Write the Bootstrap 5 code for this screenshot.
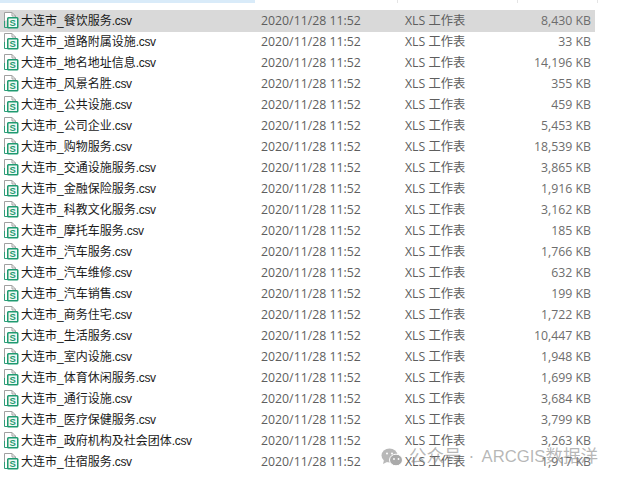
<!DOCTYPE html>
<html lang="zh"><head><meta charset="utf-8">
<link href="https://cdn.jsdelivr.net/npm/bootstrap@5.3.0/dist/css/bootstrap.min.css" rel="stylesheet">
<style>
html,body{margin:0;height:481px;overflow:hidden;background:#fff}
body{font-family:"Open Sans","Noto Sans CJK SC",sans-serif;font-size:12.3px;line-height:22px;position:relative}
.topstrip{height:3px;background:#fff}
.tab-blue{width:255px;background:#d9ebf9}
.tab-sep{border-right:1px solid #e5e5e5}
.sep-a{width:143px}.sep-b{width:120px}.sep-c{width:80px}
.files{width:595px;margin-top:7px}
.filerow{height:21px}
.filerow-on{background:#d9d9d9;height:22px;margin-bottom:-1px}
.fileicon{width:18px;height:17px;margin:2px 0 0 2px;flex:none}
.fname{width:241px;color:#1a1a1a;padding-left:1px;font-size:12px;font-family:"Liberation Sans","Noto Sans CJK SC",sans-serif}
.ext{letter-spacing:-.3px}
.fdate{width:144px;color:#5e5e5e;white-space:nowrap}
.ftype{width:110px;color:#5e5e5e;white-space:nowrap}
.fsize{width:76px;color:#6d6d6d;text-align:right;white-space:nowrap}
.wm{position:absolute;left:381px;top:443px;color:rgba(135,135,135,.6);font-size:17.5px;line-height:24px;gap:6px;font-family:"Noto Sans CJK SC",sans-serif;white-space:nowrap}
.wm-latin{font-family:"Liberation Sans",sans-serif;font-size:16.7px}
.wm-dot{display:inline-block;width:20px;text-align:center;font-family:"Liberation Sans",sans-serif}
.wm-icon{margin-top:2px}
</style></head><body>
<div class="topstrip d-flex">
<div class="tab-blue"></div><div class="sep-a tab-sep"></div><div class="sep-b tab-sep"></div><div class="sep-c tab-sep"></div>
</div>
<svg width="0" height="0" class="d-block"><defs><g id="csvicon"><path d="M2.500 9V.5H10L13.500 4V5" fill="#fff" stroke="#a0a0a0"/><path d="M10 .5V4H13.500" fill="none" stroke="#a0a0a0"/><path d="M2.500 9V15.500H6" fill="none" stroke="#2f9c78"/><rect x="5.750" y="5.750" width="10" height="10" rx=".8" fill="#eef8f4" stroke="#1f9a70" stroke-width="1.500"/><text x="10.750" y="14" font-size="9.500" font-weight="700" text-anchor="middle" fill="#1f9a70" font-family="Liberation Sans">S</text></g></defs></svg>
<div class="files" id="list"></div>
<div class="wm d-flex align-items-center">
<svg class="wm-icon" width="22" height="19" viewBox="0 0 22 19"><ellipse cx="8.500" cy="7.500" rx="8" ry="7" fill="#b8b8b8"/><path d="M3 12l-1 4 4-2z" fill="#b8b8b8"/><ellipse cx="15" cy="12" rx="6.500" ry="5.800" fill="#aaa" stroke="#fff"/><circle cx="6" cy="5.500" r="1" fill="#fff"/><circle cx="11" cy="5.500" r="1" fill="#fff"/><circle cx="13" cy="11" r=".9" fill="#fff"/><circle cx="17.500" cy="11" r=".9" fill="#fff"/></svg>
<span>公众号<span class="wm-dot">·</span><span class="wm-latin">ARCGIS</span>数据洋</span></div>
<script>
var d=[["餐饮服务","8,430"],["道路附属设施","33"],["地名地址信息","14,196"],["风景名胜","355"],["公共设施","459"],["公司企业","5,453"],["购物服务","18,539"],["交通设施服务","3,865"],["金融保险服务","1,916"],["科教文化服务","3,162"],["摩托车服务","185"],["汽车服务","1,766"],["汽车维修","632"],["汽车销售","199"],["商务住宅","1,722"],["生活服务","10,447"],["室内设施","1,948"],["体育休闲服务","1,699"],["通行设施","3,684"],["医疗保健服务","3,799"],["政府机构及社会团体","3,263"],["住宿服务","1,917"]];
document.getElementById('list').innerHTML=d.map(function(r,i){return '<div class="filerow d-flex align-items-start'+(i==0?' filerow-on':'')+'"><svg class="fileicon" viewBox="0 0 18 17"><use href="#csvicon"/></svg><div class="fname">大连市_'+r[0]+'<span class="ext">.csv</span></div><div class="fdate">2020/11/28 11:52</div><div class="ftype">XLS 工作表</div><div class="fsize">'+r[1]+' KB</div></div>'}).join('');
</script>
</body></html>
